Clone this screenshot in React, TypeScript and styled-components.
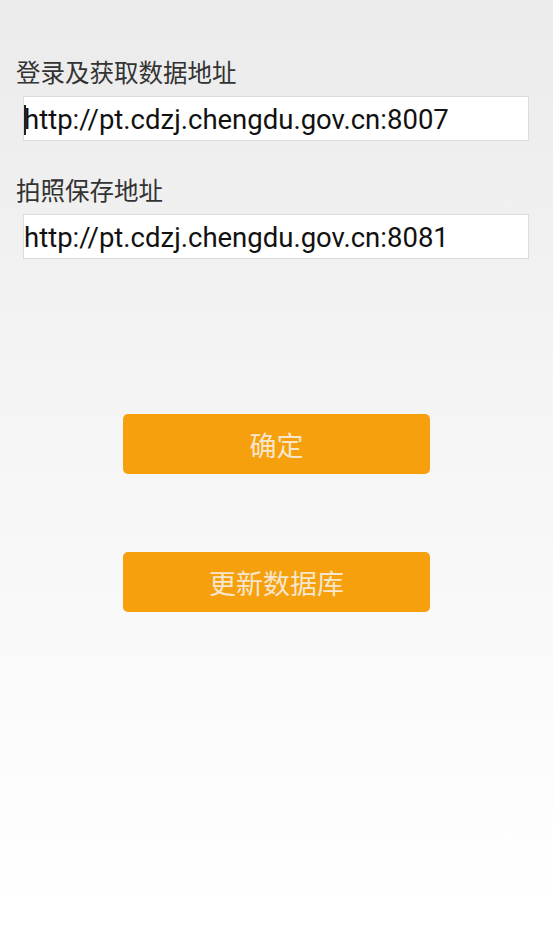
import React from 'react';
import styled, { createGlobalStyle } from 'styled-components';

const Global = createGlobalStyle`
    html, body {
        margin: 0;
        padding: 0;
    }
    body {
        font-family: Roboto, "Noto Sans CJK SC", sans-serif;
    }
`;

const Screen = styled.div`
    width: 553px;
    height: 940px;
    box-sizing: border-box;
    padding: 55px 24px 0 16px;
    background: linear-gradient(to bottom, #ebebeb 0%, #f6f6f6 50%, #ffffff 97%);
    display: flex;
    flex-direction: column;
`;

const Label = styled.div<{ $gap: number }>`
    font-family: "Noto Sans CJK SC", sans-serif;
    font-size: 24.5px;
    line-height: 34px;
    color: #333333;
    margin-top: ${(p) => p.$gap}px;
`;

const Field = styled.div`
    margin: 7px 0 0 7px;
    height: 45px;
    box-sizing: border-box;
    background: #ffffff;
    border: 1px solid #dcdcdc;
    display: flex;
    align-items: center;
    padding-top: 2px;
    font-family: Roboto, sans-serif;
    font-size: 27.5px;
    color: #111111;
`;

const Caret = styled.span`
    width: 2px;
    height: 30px;
    background: #222;
    margin-right: -2px;
`;

const Actions = styled.div`
    margin-top: 155px;
    padding-left: 107px;
    display: flex;
    flex-direction: column;
    gap: 78px;
`;

const Button = styled.button`
    width: 307px;
    height: 60px;
    border: none;
    border-radius: 5px;
    background: #f5a00c;
    color: #f8e6cc;
    font-family: "Noto Sans CJK SC", sans-serif;
    font-size: 27px;
    padding: 0;
    cursor: pointer;
`;

export default function App() {
    return (
        <>
            <Global />
            <Screen>
                <Label $gap={0}>登录及获取数据地址</Label>
                <Field>
                    <Caret />
                    http://pt.cdzj.chengdu.gov.cn:8007
                </Field>
                <Label $gap={32}>拍照保存地址</Label>
                <Field>http://pt.cdzj.chengdu.gov.cn:8081</Field>
                <Actions>
                    <Button>确定</Button>
                    <Button>更新数据库</Button>
                </Actions>
            </Screen>
        </>
    );
}
